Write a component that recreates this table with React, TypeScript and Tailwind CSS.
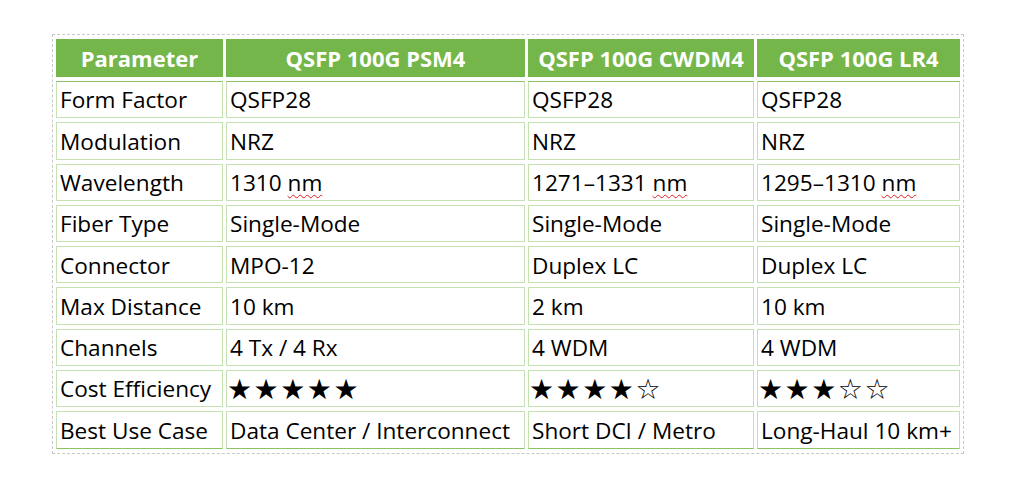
import React from "react";

type Cell = string | { stars: number } | { nm: string };

const headers = ["Parameter", "QSFP 100G PSM4", "QSFP 100G CWDM4", "QSFP 100G LR4"];

const rows: Cell[][] = [
  ["Form Factor", "QSFP28", "QSFP28", "QSFP28"],
  ["Modulation", "NRZ", "NRZ", "NRZ"],
  ["Wavelength", { nm: "1310" }, { nm: "1271–1331" }, { nm: "1295–1310" }],
  ["Fiber Type", "Single-Mode", "Single-Mode", "Single-Mode"],
  ["Connector", "MPO-12", "Duplex LC", "Duplex LC"],
  ["Max Distance", "10 km", "2 km", "10 km"],
  ["Channels", "4 Tx / 4 Rx", "4 WDM", "4 WDM"],
  ["Cost Efficiency", { stars: 5 }, { stars: 4 }, { stars: 3 }],
  ["Best Use Case", "Data Center / Interconnect", "Short DCI / Metro", "Long-Haul 10 km+"],
];

const widths = ["w-[167px]", "w-[299px]", "w-[226px]", "w-[203px]"];

function CellContent({ cell }: { cell: Cell }) {
  if (typeof cell === "string") return <>{cell}</>;
  if ("stars" in cell) {
    return (
      <span className="-ml-[3px] font-['DejaVu_Sans',sans-serif] text-[28px] tracking-[1.5px]">
        {"★".repeat(cell.stars) + "☆".repeat(5 - cell.stars)}
      </span>
    );
  }
  return (
    <>
      {cell.nm}{" "}
      <span className="underline decoration-wavy decoration-[#e02020] decoration-1 underline-offset-[3px]">
        nm
      </span>
    </>
  );
}

export default function App() {
  return (
    <div className="min-h-[489px] bg-white pl-[52px] pt-[34px] font-['Open_Sans',sans-serif] text-black">
      <div className="inline-block border border-dashed border-[#c8c8c8]">
        <table className="border-separate border-spacing-x-[3px] border-spacing-y-[4px]">
          <thead>
            <tr>
              {headers.map((h, i) => (
                <th
                  key={h}
                  className={`${widths[i]} h-[38px] bg-[#74b649] p-0 text-center align-middle text-[22px] font-bold leading-none whitespace-nowrap text-white`}
                >
                  {h}
                </th>
              ))}
            </tr>
          </thead>
          <tbody>
            {rows.map((r, ri) => (
              <tr key={ri}>
                {r.map((c, ci) => (
                  <td
                    key={ci}
                    className={`${widths[ci]} h-[37.3px] border border-[#c5e0b3] ${
                      ri === 0 ? "border-t-[#8cc265]" : ""
                    } ${ri === rows.length - 1 ? "border-b-[#8cc265]" : ""} px-[3px] pt-[2px] align-middle text-[22.6px] leading-none whitespace-nowrap`}
                  >
                    <CellContent cell={c} />
                  </td>
                ))}
              </tr>
            ))}
          </tbody>
        </table>
      </div>
    </div>
  );
}
